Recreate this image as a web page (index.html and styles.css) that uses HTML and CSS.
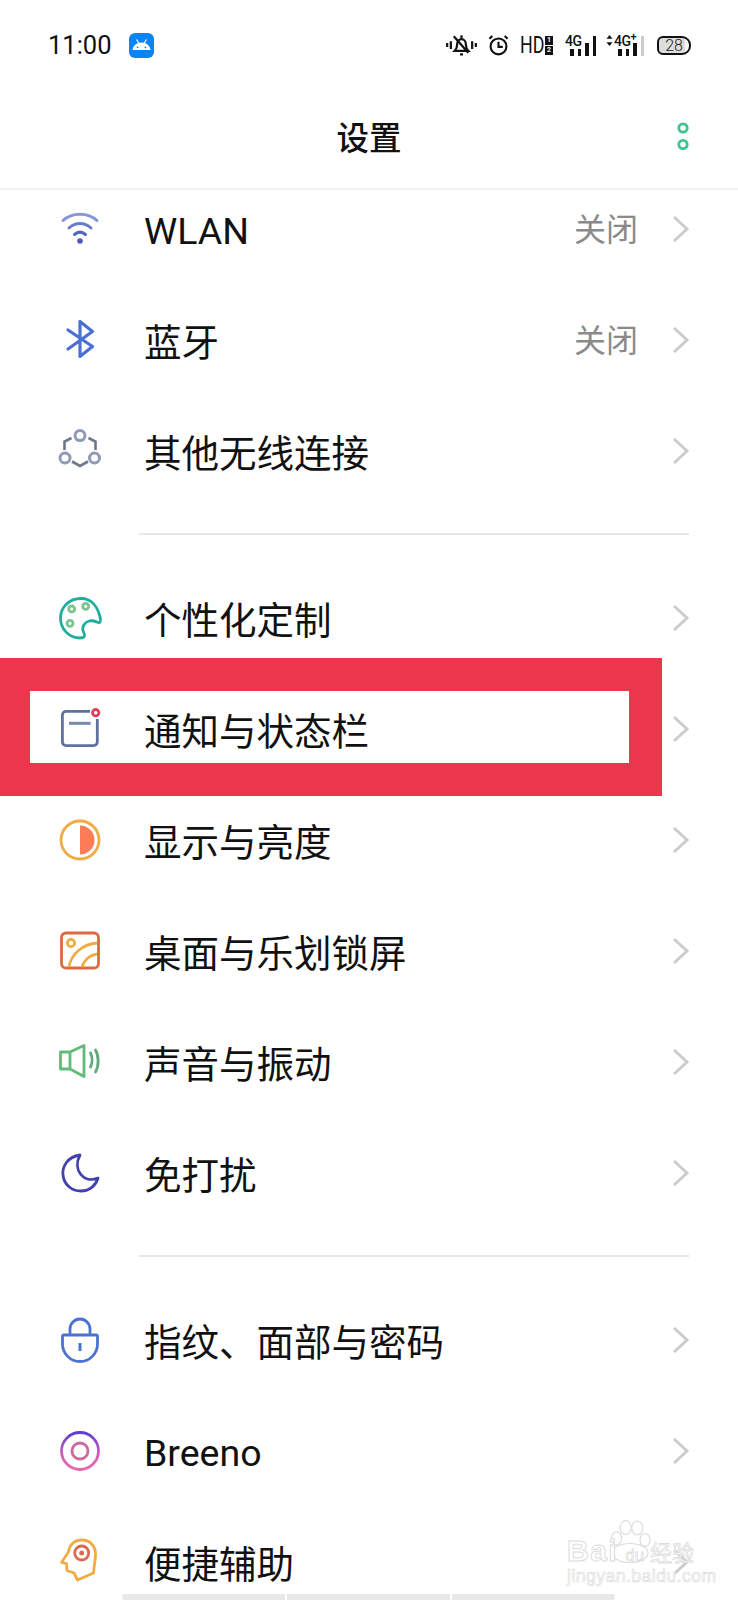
FILE: index.html
```html
<!DOCTYPE html>
<html lang="zh">
<head>
<meta charset="utf-8">
<title>设置</title>
<link rel="stylesheet" href="styles.css">
</head>
<body>
<div class="screen">
  <div class="status">
    <div class="status-left">
      <span class="time">11:00</span>
      <svg class="app-badge" viewBox="0 0 25 25"><rect width="25" height="25" rx="6" fill="#0a84f5"/><path d="M3.500 17a9 7.500 0 0 1 18 0z" fill="#fff"/><path d="M7.500 6.500l2.500 4M17.500 6.500l-2.500 4" stroke="#fff" stroke-width="1.200"/><circle cx="8.600" cy="14.300" r=".9" fill="#0a84f5"/><circle cx="16.400" cy="14.300" r=".9" fill="#0a84f5"/></svg>
    </div>
    <div class="status-right">
      <svg class="st-bell" viewBox="0 0 32 22" fill="none" stroke="#111" stroke-width="2.300"><path d="M1.200 9v4M5 7v8M27 7v8M30.800 9v4"/><path d="M9 17h14c-2-2-2.500-3.500-2.500-6.500 0-3-2-5.500-4.500-5.500s-4.500 2.500-4.500 5.500c0 3-.5 4.500-2.500 6.500z"/><path d="M8 2l15 17"/><path d="M14.500 20.700h3"/><path d="M16 1v3"/></svg>
      <svg class="st-alarm" viewBox="0 0 22 22" fill="none" stroke="#111" stroke-width="2.200"><circle cx="11" cy="12.500" r="8.300"/><path d="M11 7.500V13H15.500"/><path d="M1.500 4.500l3-3M20.500 4.500l-3-3"/></svg>
      <span class="st-hd"><span class="st-hd-text">HD</span></span>
      <span class="st-sims"><span class="sim">1</span><span class="sim">2</span></span>
      <span class="st-net">
        <span class="net-label">4G</span>
        <span class="bars"><i class="b1"></i><i class="b2"></i><i class="b3"></i><i class="b4"></i></span>
      </span>
      <span class="st-net second">
        <svg class="updown" viewBox="0 0 7 11" fill="#111"><path d="M3.500 0L6.500 3.800H.5zM3.500 11L.5 7.200H6.500z"/></svg>
        <span class="net-label">4G<sup>+</sup></span>
        <span class="bars"><i class="b1"></i><i class="b2"></i><i class="b3"></i><i class="b4 off"></i></span>
      </span>
      <span class="battery"><span class="battery-num">28</span></span>
    </div>
  </div>

  <header class="titlebar">
    <h1 class="title">设置</h1>
    <svg class="more" viewBox="0 0 14 32" fill="none" stroke="#3ec48d" stroke-width="2.800"><circle cx="7" cy="7" r="4.200"/><circle cx="7" cy="23.500" r="4.200"/></svg>
  </header>

  <main class="list">
    <section class="group">
      <div class="row">
        <svg class="icon" viewBox="0 0 48 48" fill="none" stroke-linecap="round" stroke-width="3"><path d="M7 15.500C16 7 32 7 41 15.500" stroke="#8496d8"/><path d="M13 23C19.500 17 28.500 17 35 23" stroke="#6a7ccb"/><path d="M18.500 29.500C22 26.500 26 26.500 29.500 29.500" stroke="#5565c2"/><circle cx="24" cy="36" r="2.800" fill="#4b59b9"/></svg>
        <span class="label latin">WLAN</span><span class="value">关闭</span>
        <svg class="chev" viewBox="0 0 18 28"><path d="M2 2l13 12L2 26"/></svg>
      </div>
      <div class="row">
        <svg class="icon" viewBox="0 0 48 48" fill="none" stroke="#4a70d6" stroke-width="3.200" stroke-linejoin="round" stroke-linecap="round"><path d="M12 33L36.500 15.500 24 5.500V40.500L36.500 30.500 12 14"/></svg>
        <span class="label">蓝牙</span><span class="value">关闭</span>
        <svg class="chev" viewBox="0 0 18 28"><path d="M2 2l13 12L2 26"/></svg>
      </div>
      <div class="row">
        <svg class="icon" viewBox="0 0 48 48" fill="none" stroke-width="3"><circle cx="24" cy="8.600" r="5" stroke="#8e9ab8"/><circle cx="9" cy="31" r="5" stroke="#8e9ab8"/><circle cx="38.500" cy="31" r="5" stroke="#8e9ab8"/><path d="M15.500 11L8.500 14.500V23M32.500 11L39.500 14.500V23M16 34.500L24 39l8-4.500" stroke="#6e7688" stroke-width="2.600"/></svg>
        <span class="label">其他无线连接</span>
        <svg class="chev" viewBox="0 0 18 28"><path d="M2 2l13 12L2 26"/></svg>
      </div>
    </section>
    <hr class="divider">
    <section class="group">
      <div class="row">
        <svg class="icon" viewBox="0 0 48 48" fill="none" stroke-width="2.800"><path d="M25 4.500C13 4.500 4.500 13.500 4.500 24C4.500 35 13 44 24 44C29 44 29.500 41 27.500 38C25 33 29 28 33 27C37 26 39.500 27.500 42 28.500C44.500 29.500 45 26.500 44 23C41.500 12 35 4.500 25 4.500z" stroke="#1fae9c"/><circle cx="15.700" cy="15" r="3" stroke="#7cc48d"/><circle cx="29.700" cy="12.300" r="3" stroke="#7cc48d"/><circle cx="14" cy="29.300" r="3" stroke="#7cc48d"/></svg>
        <span class="label">个性化定制</span>
        <svg class="chev" viewBox="0 0 18 28"><path d="M2 2l13 12L2 26"/></svg>
      </div>
      <div class="row">
        <svg class="icon" viewBox="0 0 48 48" fill="none"><path d="M34 6.400H10a3.600 3.600 0 0 0-3.600 3.600V37a3.600 3.600 0 0 0 3.600 3.600h27.700a3.600 3.600 0 0 0 3.600-3.600V14" stroke="#5f729f" stroke-width="2.800"/><path d="M13 18.300h21.700" stroke="#7a8aae" stroke-width="3"/><circle cx="39.700" cy="7.700" r="3.200" stroke="#e0405a" stroke-width="2.800"/></svg>
        <span class="label">通知与状态栏</span>
        <svg class="chev" viewBox="0 0 18 28"><path d="M2 2l13 12L2 26"/></svg>
      </div>
      <div class="row">
        <svg class="icon" viewBox="0 0 48 48" fill="none"><circle cx="24" cy="24" r="19" stroke="#f0ab45" stroke-width="2.800"/><path d="M24 9.500a14.500 14.500 0 0 1 0 29z" fill="#fb7c55"/></svg>
        <span class="label">显示与亮度</span>
        <svg class="chev" viewBox="0 0 18 28"><path d="M2 2l13 12L2 26"/></svg>
      </div>
      <div class="row">
        <svg class="icon" viewBox="0 0 48 48" fill="none" stroke-width="2.800"><rect x="5.500" y="6" width="37" height="35" rx="4.500" stroke="#dc6a3f"/><circle cx="15" cy="16" r="3.600" stroke="#f0ab45"/><path d="M13 40C15 27 27 17 41 16M26 40c2-7 8-12 15-13" stroke="#f0ab45"/></svg>
        <span class="label">桌面与乐划锁屏</span>
        <svg class="chev" viewBox="0 0 18 28"><path d="M2 2l13 12L2 26"/></svg>
      </div>
      <div class="row">
        <svg class="icon" viewBox="0 0 48 48" fill="none" stroke-linejoin="round" stroke-linecap="round" stroke-width="2.800"><path d="M4.500 14h9.500v17H4.500zM14 14L28 7.500V38.500L14 31" stroke="#62bb78"/><path d="M34.500 15c2 4 2 10 0 14" stroke="#62a87e"/><path d="M39.500 12c3.500 6 3.500 16 0 22" stroke="#62a87e"/></svg>
        <span class="label">声音与振动</span>
        <svg class="chev" viewBox="0 0 18 28"><path d="M2 2l13 12L2 26"/></svg>
      </div>
      <div class="row">
        <svg class="icon" viewBox="0 0 48 48" fill="none" stroke="#4141b0" stroke-width="2.800" stroke-linejoin="round"><path d="M24 6C11 8 6 18 7 26c1 10 9 16 18 16 9 0 15-6 17-13-14 6-26-8-18-23z"/></svg>
        <span class="label">免打扰</span>
        <svg class="chev" viewBox="0 0 18 28"><path d="M2 2l13 12L2 26"/></svg>
      </div>
    </section>
    <hr class="divider">
    <section class="group">
      <div class="row">
        <svg class="icon" viewBox="0 0 48 48" fill="none" stroke="#4a72d0" stroke-width="2.800"><path d="M14 19v-6a10 10 0 0 1 20 0v6"/><path d="M8 19h32a1.500 1.500 0 0 1 1.500 1.500V28a17.500 17.500 0 0 1-35 0v-7.500A1.500 1.500 0 0 1 8 19z"/><path d="M24 27v8" stroke-width="3"/></svg>
        <span class="label">指纹、面部与密码</span>
        <svg class="chev" viewBox="0 0 18 28"><path d="M2 2l13 12L2 26"/></svg>
      </div>
      <div class="row">
        <svg class="icon" viewBox="0 0 48 48" fill="none" stroke-width="2.800"><defs><linearGradient id="breeno" x1="0" y1="0" x2="0" y2="1"><stop offset="0" stop-color="#5b3fd0"/><stop offset=".5" stop-color="#c45cc0"/><stop offset="1" stop-color="#e86aa8"/></linearGradient></defs><circle cx="24" cy="24" r="18.500" stroke="url(#breeno)"/><circle cx="24" cy="24" r="8" stroke="#cc6a9a"/></svg>
        <span class="label latin">Breeno</span>
        <svg class="chev" viewBox="0 0 18 28"><path d="M2 2l13 12L2 26"/></svg>
      </div>
      <div class="row">
        <svg class="icon" viewBox="0 0 48 48" fill="none" stroke-width="2.800" stroke-linejoin="round"><path d="M12.500 14C13.500 6 19 2 26 2C34.500 2 39.500 8.500 39.500 16C39.500 21 38.500 25 37.500 35L21.500 42L18 35L11 32.500L10.500 25.500L5.500 24.500z" stroke="#f0ab45"/><circle cx="25.700" cy="15" r="7" stroke="#dc6a50"/><circle cx="25.700" cy="15" r="2.500" fill="#dc6a50"/></svg>
        <span class="label">便捷辅助</span>
        <svg class="chev" viewBox="0 0 18 28"><path d="M2 2l13 12L2 26"/></svg>
      </div>
    </section>
  </main>

  <div class="annotation"></div>

  <div class="watermark">
    <svg class="paw" viewBox="0 0 44 44" fill="#fff" stroke="#ddd" stroke-width="1.200"><ellipse cx="5.700" cy="18.300" rx="5" ry="6.500"/><ellipse cx="14.700" cy="7.700" rx="5.500" ry="7"/><ellipse cx="26.300" cy="8" rx="5.500" ry="7"/><ellipse cx="34" cy="20" rx="5" ry="6.500"/><ellipse cx="19" cy="33" rx="18" ry="9.500"/></svg>
    <div class="wm-line"><span class="wm-bai">Bai</span><span class="wm-du">du</span><span class="wm-jy">经验</span></div>
    <div class="wm-url">jingyan.baidu.com</div>
  </div>

  <div class="scrollbar"><span></span><span></span><span></span></div>
</div>
</body>
</html>
```

FILE: styles.css
```css
* { box-sizing: border-box; }
html, body { margin: 0; padding: 0; background: #fff; }
.screen {
  position: relative;
  width: 738px;
  height: 1600px;
  overflow: hidden;
  background: #fff;
  color: #111;
  font-family: "Noto Sans CJK SC", "Noto Sans", sans-serif;
}
.status {
  height: 90px;
  display: flex;
  justify-content: space-between;
  align-items: center;
  padding: 0 47px 0 48px;
}
.status-left { display: flex; align-items: center; gap: 17px; }
.time { font: 400 25.500px/30px Roboto, sans-serif; color: #111; }
.app-badge { width: 25px; height: 25px; }
.status-right { display: flex; align-items: center; height: 30px; }
.st-bell { width: 31px; height: 22px; margin-right: 11px; }
.st-alarm { width: 21px; height: 22px; margin-right: 11px; }
.st-hd { display: block; width: 23px; height: 24px; }
.st-hd-text { display: block; width: 32px; font: 400 23.500px/24px Roboto, sans-serif; color: #111; transform: scaleX(.76); transform-origin: left center; }
.st-sims { display: flex; flex-direction: column; gap: 1px; margin: 0 12px 0 2px; }
.sim { width: 8px; height: 9px; background: #111; color: #fff; font: 700 7px/9px Roboto, sans-serif; text-align: center; }
.st-net { position: relative; display: block; width: 31px; height: 24px; margin-bottom: 3px; }
.net-label { position: absolute; left: 0; top: 2px; font: 500 14px/14px Roboto, sans-serif; letter-spacing: -.5px; color: #111; white-space: nowrap; }
.net-label sup { font-size: 11px; line-height: 0; }
.bars { position: absolute; right: 0; bottom: 0; display: flex; align-items: flex-end; gap: 4px; }
.bars i { display: block; width: 3.500px; background: #111; }
.bars .b1 { height: 7px; }
.bars .b2 { height: 7px; }
.bars .b3 { height: 13px; }
.bars .b4 { height: 20px; }
.bars .off { background: #ccc; }
.st-net.second { width: 38px; margin-left: 10px; }
.st-net.second .updown { position: absolute; left: 0; top: 3px; width: 7px; height: 11px; }
.st-net.second .net-label { left: 8px; }
.battery {
  display: block;
  width: 34px;
  height: 19px;
  margin-left: 13px;
  border: 2px solid #111;
  border-radius: 6px 9px 9px 6px;
  background: linear-gradient(to right, #ddd 85%, #fff 85%);
  text-align: center;
}
.battery-num { display: block; font: 300 16px/15px Roboto, sans-serif; color: #222; }
.titlebar {
  position: relative;
  height: 100px;
  display: flex;
  align-items: center;
  justify-content: center;
  padding-bottom: 7px;
  border-bottom: 2px solid #f0f0f0;
  background: #fff;
  z-index: 1;
}
.title { margin: 0; font-size: 32.500px; font-weight: 500; line-height: 40px; color: #111; }
.more { position: absolute; right: 48px; top: 31px; width: 14px; height: 32px; }
.list { margin-top: -17px; }
.row { display: flex; align-items: center; height: 111px; padding: 0 48px 0 56px; }
.icon { width: 48px; height: 48px; flex: none; margin-right: 40px; }
.label { flex: 1; font-size: 37.500px; line-height: 50px; color: #111; }
.label.latin { font-family: Roboto, sans-serif; font-size: 37.500px; margin-top: 4px; }
.value { font-size: 32px; line-height: 50px; color: #8a8a8a; margin: 0 34px 4px 0; }
.chev { width: 18px; height: 28px; flex: none; fill: none; stroke: #ccc; stroke-width: 3; }
.divider { margin: 27px 49px 27px 139px; height: 2px; border: 0; background: #e8e8e8; }
.annotation {
  position: absolute;
  left: 0;
  top: 658px;
  width: 662px;
  height: 138px;
  border: 33px solid #ec364c;
  border-left-width: 30px;
}
.watermark {
  position: absolute;
  left: 567px;
  top: 1520px;
  width: 134px;
  height: 66px;
  color: #fff;
}
.paw { position: absolute; left: 44px; top: 0; width: 44px; height: 44px; }
.wm-line { position: absolute; left: 0; top: 14px; display: flex; align-items: baseline; font-family: "Liberation Sans", sans-serif; }
.wm-bai { font-size: 30px; line-height: 34px; font-weight: 700; color: #fff; -webkit-text-stroke: 1px #ddd; letter-spacing: 1.500px; }
.wm-du { font-size: 17px; font-weight: 400; line-height: 34px; margin: 0 6px 0 7px; color: #fff; -webkit-text-stroke: .8px #ddd; }
.wm-jy { font-family: "Noto Sans CJK SC", sans-serif; font-size: 22px; line-height: 34px; color: #fff; -webkit-text-stroke: .8px #ddd; }
.wm-url { position: absolute; left: 0; top: 47px; font: 400 17.500px/18px "Liberation Sans", sans-serif; letter-spacing: .5px; color: #fff; -webkit-text-stroke: .7px #ddd; white-space: nowrap; }
.scrollbar { position: absolute; left: 122px; top: 1594px; width: 493px; height: 6px; display: flex; gap: 2px; }
.scrollbar span { flex: 1; background: #e8e8e8; }
.scrollbar span:first-child { border-radius: 6px 0 0 6px; }
.scrollbar span:last-child { border-radius: 0 6px 6px 0; }
```
